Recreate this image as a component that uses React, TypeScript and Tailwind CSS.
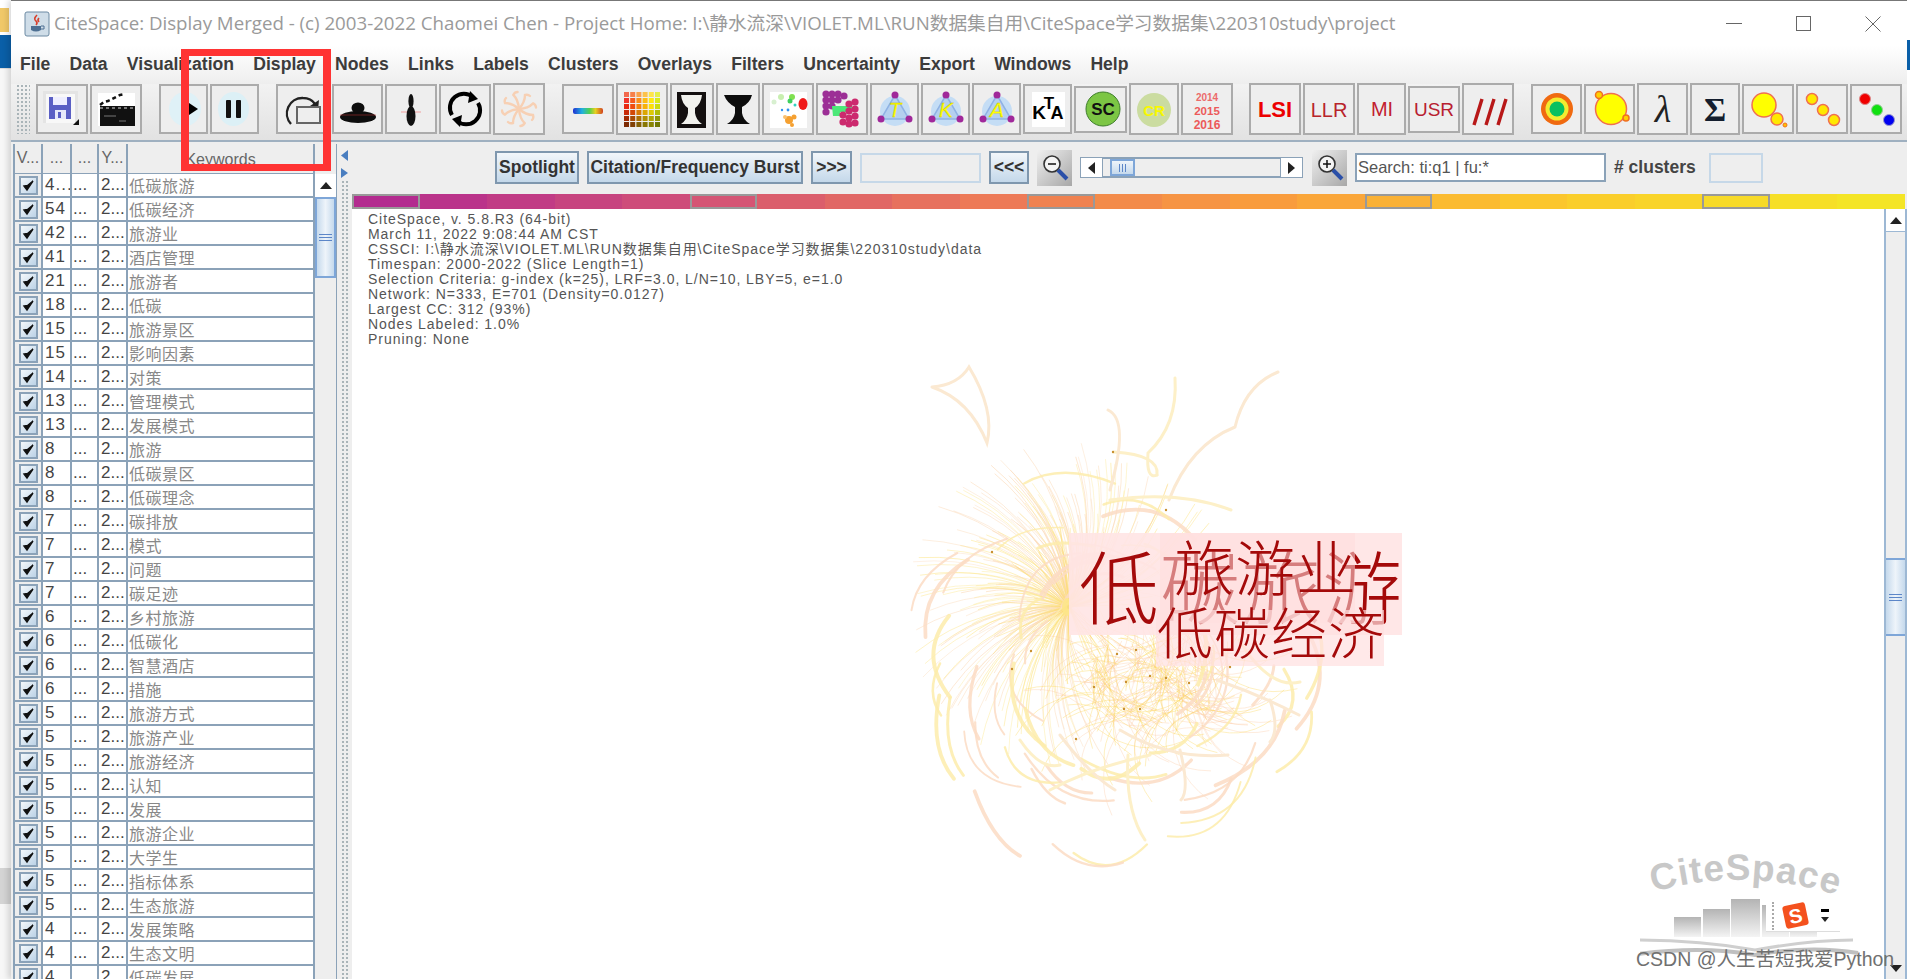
import React from "react";

const SANS = "font-['Liberation_Sans','Noto_Sans_CJK_SC',sans-serif]";

const rows: [string, string][] = [
  ["4...", "低碳旅游"], ["54", "低碳经济"], ["42", "旅游业"], ["41", "酒店管理"], ["21", "旅游者"], ["18", "低碳"],
  ["15", "旅游景区"], ["15", "影响因素"], ["14", "对策"], ["13", "管理模式"], ["13", "发展模式"], ["8", "旅游"],
  ["8", "低碳景区"], ["8", "低碳理念"], ["7", "碳排放"], ["7", "模式"], ["7", "问题"], ["7", "碳足迹"],
  ["6", "乡村旅游"], ["6", "低碳化"], ["6", "智慧酒店"], ["6", "措施"], ["5", "旅游方式"], ["5", "旅游产业"],
  ["5", "旅游经济"], ["5", "认知"], ["5", "发展"], ["5", "旅游企业"], ["5", "大学生"], ["5", "指标体系"],
  ["5", "生态旅游"], ["4", "发展策略"], ["4", "生态文明"], ["4", "低碳发展"],
];

const menus = ["File", "Data", "Visualization", "Display", "Nodes", "Links", "Labels", "Clusters", "Overlays", "Filters", "Uncertainty", "Export", "Windows", "Help"];

const info = [
  "CiteSpace, v. 5.8.R3 (64-bit)",
  "March 11, 2022 9:08:44 AM CST",
  "CSSCI: I:\\静水流深\\VIOLET.ML\\RUN数据集自用\\CiteSpace学习数据集\\220310study\\data",
  "Timespan: 2000-2022 (Slice Length=1)",
  "Selection Criteria: g-index (k=25), LRF=3.0, L/N=10, LBY=5, e=1.0",
  "Network: N=333, E=701 (Density=0.0127)",
  "Largest CC: 312 (93%)",
  "Nodes Labeled: 1.0%",
  "Pruning: None",
];

const keys: [number, number, number][] = [[179, 43, 143], [209, 79, 120], [236, 120, 88], [250, 158, 60], [251, 204, 43], [244, 229, 38]];
const segs = Array.from({ length: 23 }, (_, i) => {
  const t = (i / 22) * 5;
  const a = Math.min(4, Math.floor(t));
  const f = t - a;
  const c = keys[a].map((v, k) => Math.round(v + (keys[a + 1][k] - v) * f));
  return `rgb(${c[0]},${c[1]},${c[2]})`;
});

function rng(seed: number) {
  let s = seed;
  return () => {
    s = (s * 16807) % 2147483647;
    return s / 2147483647;
  };
}
const fine: { d: string; c: string; o: number }[] = [];
const arcs: { d: string; c: string; o: number; w: number }[] = [];
{
  const r = rng(4242);
  const cx = 1069, cy = 607;
  for (let i = 0; i < 230; i++) {
    const a = Math.PI * 0.42 + r() * Math.PI * 1.45;
    const l = 60 + r() * 105;
    const x = cx + Math.cos(a) * l, y = cy + Math.sin(a) * l;
    const b = a + 0.35;
    const mx = cx + Math.cos(b) * l * 0.55, my = cy + Math.sin(b) * l * 0.55;
    fine.push({ d: `M${cx} ${cy}Q${mx.toFixed(1)} ${my.toFixed(1)} ${x.toFixed(1)} ${y.toFixed(1)}`, c: r() > 0.5 ? "#fde68a" : "#fbd8b4", o: 0.5 + r() * 0.35 });
  }
  for (let i = 0; i < 70; i++) {
    const a = Math.PI * 0.2 + r() * Math.PI * 1.8;
    const l = 25 + r() * 60;
    fine.push({ d: `M${cx} ${cy}L${(cx + Math.cos(a) * l).toFixed(1)} ${(cy + Math.sin(a) * l).toFixed(1)}`, c: "#fcdc6c", o: 0.6 });
  }
  for (let i = 0; i < 260; i++) {
    const hx = 1090 + r() * 120, hy = 640 + r() * 90;
    const a = r() * Math.PI * 2;
    const l = 25 + r() * 70;
    const x = hx + Math.cos(a) * l, y = hy + Math.sin(a) * l;
    fine.push({ d: `M${hx.toFixed(1)} ${hy.toFixed(1)}Q${(hx + Math.cos(a + 0.5) * l * 0.6).toFixed(1)} ${(hy + Math.sin(a + 0.5) * l * 0.6).toFixed(1)} ${x.toFixed(1)} ${y.toFixed(1)}`, c: r() > 0.45 ? "#fcd34d" : "#fbc9a0", o: 0.5 });
  }
  for (let i = 0; i < 70; i++) {
    const a = r() * Math.PI * 2;
    const rad = 60 + r() * 130;
    const ccx = 1115 + Math.cos(a) * rad * 1.05, ccy = 665 + Math.sin(a) * rad;
    if (ccx > 1190 && ccy < 650) continue;
    const sw = 0.5 + r() * 0.7;
    const l = 22 + r() * 30;
    const x1 = ccx + Math.cos(a + 1.6) * l, y1 = ccy + Math.sin(a + 1.6) * l;
    const x2 = ccx + Math.cos(a - 1.6 * sw) * l, y2 = ccy + Math.sin(a - 1.6 * sw) * l;
    const qx = ccx + Math.cos(a) * l * 0.7, qy = ccy + Math.sin(a) * l * 0.7;
    arcs.push({ d: `M${x1.toFixed(1)} ${y1.toFixed(1)}Q${qx.toFixed(1)} ${qy.toFixed(1)} ${x2.toFixed(1)} ${y2.toFixed(1)}`, c: r() > 0.5 ? "#fdecac" : "#fbdcc4", o: 0.85, w: 1.5 + r() * 2.5 });
  }
}
const handArcs = [
  "M932 387Q958 385 969 367Q995 410 987 443Q970 400 932 387",
  "M1175 378Q1178 425 1148 453Q1146 480 1157 475",
  "M1278 372Q1245 385 1235 427Q1190 445 1169 500",
  "M1114 452Q1160 455 1157 475",
  "M1108 410Q1130 420 1110 490",
  "M1110 500Q1180 490 1231 510",
  "M1217 680Q1260 695 1299 715",
  "M1239 640Q1270 690 1300 682",
  "M1120 730Q1170 760 1228 755",
  "M1128 755Q1125 810 1145 840",
  "M1060 735Q1090 775 1115 790",
  "M1050 790Q1090 768 1150 755",
  "M1180 750Q1190 790 1181 800",
  "M1020 740Q1040 770 1060 765",
  "M1270 700Q1280 730 1270 742",
];
const nodes: [number, number][] = [[1069, 607], [992, 552], [1166, 510], [1113, 452], [1031, 651], [1012, 669], [1117, 654], [1136, 650], [1150, 676], [1166, 678], [1189, 683], [1126, 682], [1094, 687], [1124, 709], [1140, 709], [1076, 739], [1230, 667]];

function Tb({ w, tall, short, children }: { w: string; tall?: boolean; short?: boolean; children?: React.ReactNode }) {
  return (
    <div className={`${w} ${short ? "h-[47px] self-center" : tall ? "h-[52px] -mt-[1px]" : "h-[50px]"} shrink-0 border-2 border-[#ababab] bg-[#eeeeee] flex items-center justify-center overflow-hidden`}>
      {children}
    </div>
  );
}

function Ic({ children }: { children: React.ReactNode }) {
  return (
    <svg width="48" height="46" viewBox="0 0 48 46" className="shrink-0">
      {children}
    </svg>
  );
}

function IconText({ t, fill, size, weight = 400, y = 29, x = 24, font = "Liberation Sans" }: { t: string; fill: string; size: number; weight?: number; y?: number; x?: number; font?: string }) {
  return (
    <text x={x} y={y} textAnchor="middle" fill={fill} fontSize={size} fontWeight={weight} fontFamily={font}>
      {t}
    </text>
  );
}

const gridCols = [
  ["#f2684c", "#f7804a", "#fba24c", "#fcc24a", "#fde54a", "#e4ee4a"],
  ["#f0352a", "#f65a1e", "#fa8e18", "#fdbc14", "#fee80e", "#d8ea1a"],
  ["#e82a12", "#f04c0e", "#f4840a", "#f8b208", "#fde008", "#ccdc10"],
  ["#c82a08", "#d24806", "#d87a04", "#dca604", "#dcc804", "#b0bc08"],
  ["#a02a04", "#a84a04", "#ac7004", "#b09004", "#b0a404", "#909808"],
  ["#7c2a04", "#804004", "#846004", "#887804", "#888404", "#707804"],
];

function Tri({ l }: { l: string }) {
  return (
    <Ic>
      <circle cx="24" cy="25" r="15" fill="#c4ddf5" />
      <path d="M24 9L38 33H10Z" fill="#b4d0ef" stroke="#8fb2e4" strokeWidth="1.5" />
      <circle cx="24" cy="9" r="3.5" fill="#a0289a" />
      <circle cx="10" cy="33" r="3.5" fill="#a0289a" />
      <circle cx="38" cy="33" r="3.5" fill="#a0289a" />
      <text x="24" y="31" textAnchor="middle" fill="#ffff00" stroke="#c2b800" strokeWidth="0.3" fontSize="21" fontStyle="italic" fontFamily="Liberation Sans">{l}</text>
    </Ic>
  );
}

function Toolbar() {
  return (
    <div className="h-[56px] flex items-start pt-0 bg-gradient-to-b from-[#f2f2f2] to-[#e2e2e2]">
      <div className="w-[14px] h-[50px] ml-[5px] mr-[6px] shrink-0 bg-[radial-gradient(#a9b4b8_1px,transparent_1.2px)] bg-[length:4px_4px]" />
      <div className="flex gap-[2px] items-start">
        <Tb w="w-[52px]"><Ic>
          <rect x="5" y="5" width="35" height="32" fill="#e4e4e4" /><rect x="8" y="8" width="29" height="29" fill="#f8f8f8" />
          <path d="M11 11H33V33H11Z" fill="#5a5fc4" /><rect x="15" y="11" width="14" height="8" fill="#eef" /><rect x="17" y="24" width="11" height="9" fill="#e6e8fa" /><rect x="20" y="26" width="3" height="6" fill="#5a5fc4" />
          <path d="M41 33V39H35Z" fill="#111" />
        </Ic></Tb>
        <Tb w="w-[52px]"><Ic>
          <rect x="6" y="7" width="37" height="33" fill="#fff" />
          <path d="M8 19L12 16L16 15L20 13L24 11L28 9L33 8" stroke="#111" strokeWidth="2.5" strokeDasharray="4 3" fill="none" />
          <rect x="8" y="20" width="35" height="20" fill="#111" />
          <path d="M8 22H43" stroke="#ddd" strokeWidth="1" strokeDasharray="3 3" /><path d="M12 30H24M27 35H34" stroke="#777" strokeWidth="1" />
        </Ic></Tb>
        <div className="w-[13px] shrink-0" />
        <Tb w="w-[49px]"><Ic>
          <ellipse cx="25" cy="23" rx="16" ry="17" fill="#dff1f7" /><path d="M26 15L38 23L26 31Z" fill="#000" /><path d="M22 15H26V31H22Z" fill="#000" />
        </Ic></Tb>
        <Tb w="w-[49px]"><Ic>
          <ellipse cx="22.5" cy="23" rx="15.5" ry="17" fill="#dcf0f6" /><rect x="15" y="14" width="5" height="18" rx="1" fill="#111" /><rect x="25" y="14" width="5" height="18" rx="1" fill="#111" />
        </Ic></Tb>
        <div className="w-[13px] shrink-0" />
        <Tb w="w-[54px]"><Ic>
          <path d="M12 38A15.5 15.5 0 0 1 24 12Q32 12 36 18" fill="none" stroke="#222" strokeWidth="2.4" /><path d="M40 14L39 24L31 20Z" fill="#222" />
          <rect x="18" y="21" width="23" height="16" fill="#eee" stroke="#666" strokeWidth="2" />
        </Ic></Tb>
        <Tb w="w-[51px]" ><Ic>
          <ellipse cx="24" cy="31" rx="18" ry="6" fill="#0d0d0d" /><ellipse cx="24" cy="22" rx="6.5" ry="5.5" fill="#0d0d0d" /><path d="M12 29Q24 23 36 29" fill="#0d0d0d" /><path d="M6 29H42" stroke="#c33" strokeWidth="0.7" opacity="0.7" />
        </Ic></Tb>
        <Tb w="w-[52px]"><Ic>
          <path d="M14 26H34" stroke="#f0a0a0" strokeWidth="1" /><ellipse cx="24" cy="15" rx="2.6" ry="7" fill="#111" /><ellipse cx="24" cy="30" rx="4.5" ry="10" fill="#111" />
        </Ic></Tb>
        <Tb w="w-[52px]"><Ic>
          <path d="M11 29A14 14 0 0 1 32 11" fill="none" stroke="#000" strokeWidth="4" /><path d="M37 17A14 14 0 0 1 16 35" fill="none" stroke="#000" strokeWidth="4" />
          <path d="M29 5L37 13L27 17Z" fill="#000" /><path d="M19 41L11 33L21 29Z" fill="#000" />
        </Ic></Tb>
        <Tb w="w-[52px]" tall><Ic>
          <g stroke="#f7d0b4" strokeWidth="2.4" fill="none" strokeLinecap="round">
            {[0, 45, 90, 135, 180, 225, 270, 315].map((a) => (
              <path key={a} d="M24 23Q30 16 30 9Q33 8 35 10" transform={`rotate(${a} 24 23)`} />
            ))}
          </g>
        </Ic></Tb>
        <div className="w-[13px] shrink-0" />
        <Tb w="w-[52px]"><svg width="48" height="46" viewBox="0 0 48 46">
          <defs><linearGradient id="sp"><stop offset="0" stopColor="#2030d0" /><stop offset=".3" stopColor="#20b0e0" /><stop offset=".55" stopColor="#50d050" /><stop offset=".75" stopColor="#e8d020" /><stop offset="1" stopColor="#d04020" /></linearGradient></defs>
          <rect x="9" y="22" width="30" height="6" rx="2" fill="url(#sp)" />
        </svg></Tb>
        <Tb w="w-[52px]" tall><Ic>
          {gridCols.map((row, r) => row.map((c, i) => <rect key={`${r}-${i}`} x={6 + i * 6.2} y={6 + r * 6} width="5" height="5" fill={c} />))}
        </Ic></Tb>
        <Tb w="w-[44px]" tall><svg width="40" height="46" viewBox="0 0 40 46">
          <rect x="5" y="6" width="29" height="36" fill="#141010" />
          <path d="M9 9H30Q29 18 23 22V27Q24 34 30 38H9Q15 34 16 27V22Q10 18 9 9Z" fill="#f2f2ee" />
        </svg></Tb>
        <Tb w="w-[44px]" tall><svg width="40" height="46" viewBox="0 0 40 46">
          <path d="M6 9H34Q32 17 24 21V27Q25 34 32 38H9Q16 34 17 27V21Q9 17 6 9Z" fill="#0c0c0c" />
        </svg></Tb>
        <Tb w="w-[52px]" tall><Ic>
          <rect x="6" y="6" width="37" height="36" fill="#fff" />
          <circle cx="17" cy="11" r="3" fill="#c8efb0" /><circle cx="28" cy="11" r="3" fill="#80e050" /><circle cx="26" cy="15" r="2.5" fill="#40d060" /><circle cx="10" cy="16" r="2.5" fill="#d8f0d0" />
          <ellipse cx="39" cy="18" rx="4.5" ry="6" fill="#f01818" /><circle cx="31" cy="19" r="1.5" fill="#30d0c0" /><circle cx="18" cy="24" r="1.2" fill="#3090f0" /><circle cx="24" cy="24" r="1.4" fill="#3090f0" />
          <circle cx="25" cy="34" r="4" fill="#f5a030" /><circle cx="30" cy="31" r="2.5" fill="#f5a030" /><circle cx="21" cy="31" r="2" fill="#f9c070" /><circle cx="28" cy="39" r="2" fill="#f5a030" />
        </Ic></Tb>
        <Tb w="w-[52px]" tall><Ic>
          <g fill="#9c2f96">{[[8, 8], [14, 8], [20, 8], [26, 10], [8, 14], [14, 14], [20, 14], [8, 20], [14, 20], [8, 26]].map(([x, y]) => <circle key={`${x}${y}`} cx={x} cy={y} r="3.6" />)}</g>
          <path d="M14 20H34V26H22V30H15Z" fill="#4be878" />
          <g fill="#cc2a6e">{[[37, 16], [31, 18], [37, 23], [31, 25], [25, 29], [37, 30], [31, 32], [25, 36], [31, 38], [37, 37]].map(([x, y]) => <circle key={`${x}${y}`} cx={x} cy={y} r="3.6" />)}</g>
        </Ic></Tb>
        <Tb w="w-[49px]" tall><Tri l="T" /></Tb>
        <Tb w="w-[49px]" tall><Tri l="K" /></Tb>
        <Tb w="w-[49px]" tall><Tri l="A" /></Tb>
        <Tb w="w-[49px]"><Ic>
          <rect x="8" y="6" width="33" height="35" fill="#fff" />
          <text x="15" y="33" textAnchor="middle" fontSize="19" fontWeight="700" fontFamily="Liberation Sans">K</text>
          <text x="25" y="23" textAnchor="middle" fontSize="17" fontWeight="700" fontFamily="Liberation Sans">T</text>
          <text x="33" y="33" textAnchor="middle" fontSize="18" fontWeight="700" fontFamily="Liberation Sans">A</text>
        </Ic></Tb>
        <Tb w="w-[53px]" short><Ic>
          <circle cx="26" cy="22" r="17" fill="#7cc644" stroke="#3e7d2c" strokeWidth="1" /><IconText t="SC" x={26} y={28} fill="#111" size={17} weight={700} />
        </Ic></Tb>
        <Tb w="w-[50px]" tall><Ic>
          <circle cx="24" cy="24" r="17" fill="#cbdca0" /><IconText t="CR" y={30} fill="#f8f800" size={15} weight={700} />
        </Ic></Tb>
        <Tb w="w-[52px]" tall><Ic>
          <IconText t="2014" y={15} fill="#ec6a6a" size={10} weight={700} /><IconText t="2015" y={29} fill="#ec5a5a" size={11.5} weight={700} /><IconText t="2016" y={43} fill="#ec5a5a" size={12} weight={700} />
        </Ic></Tb>
        <div className="w-[12px] shrink-0" />
        <Tb w="w-[52px]" tall><Ic><IconText t="LSI" y={31} fill="#ec0000" size={22} weight={700} /></Ic></Tb>
        <Tb w="w-[52px]" tall><Ic><IconText t="LLR" y={31} fill="#b8242a" size={20} /></Ic></Tb>
        <Tb w="w-[49px]" tall><Ic><IconText t="MI" y={30} fill="#c22030" size={20} /></Ic></Tb>
        <Tb w="w-[52px]" short><Ic><IconText t="USR" y={29} fill="#b82030" size={19} /></Ic></Tb>
        <Tb w="w-[52px]" tall><Ic>
          <path d="M10 39L18 13M22 39L30 13M34 39L42 13" stroke="#b81818" strokeWidth="3.4" />
        </Ic></Tb>
        <div className="w-[13px] shrink-0" />
        <Tb w="w-[51px]"><Ic>
          <circle cx="24" cy="23" r="16" fill="#f06a10" /><circle cx="24" cy="23" r="11.5" fill="#f2ec30" /><circle cx="24" cy="23" r="7.5" fill="#08c060" />
        </Ic></Tb>
        <Tb w="w-[51px]"><Ic>
          <circle cx="25" cy="23" r="15.5" fill="#ffff00" stroke="#f07050" strokeWidth="1.5" /><circle cx="13" cy="9" r="3.5" fill="#ffd000" stroke="#f07020" strokeWidth="1.5" /><circle cx="40" cy="32" r="3" fill="#ffd000" stroke="#f07020" strokeWidth="1.5" />
        </Ic></Tb>
        <Tb w="w-[51px]" tall><Ic>
          <text x="24" y="36" textAnchor="middle" fontSize="38" fontStyle="italic" fontFamily="Liberation Serif" fill="#222">λ</text>
        </Ic></Tb>
        <Tb w="w-[50px]" tall><Ic>
          <text x="24" y="35" textAnchor="middle" fontSize="34" fontWeight="700" fontFamily="Liberation Serif" fill="#141e2e">Σ</text>
        </Ic></Tb>
        <Tb w="w-[52px]"><Ic>
          <circle cx="20" cy="19" r="12" fill="#ffff00" stroke="#f07050" strokeWidth="1.5" /><circle cx="33" cy="33" r="6" fill="#ffe800" stroke="#f07050" strokeWidth="1.5" /><circle cx="41" cy="39" r="2" fill="#ffc000" stroke="#f07020" />
        </Ic></Tb>
        <Tb w="w-[52px]"><Ic>
          <circle cx="14" cy="13" r="5.5" fill="#ffe800" stroke="#f07050" strokeWidth="1.5" /><circle cx="25" cy="24" r="5.5" fill="#ffe800" stroke="#f07050" strokeWidth="1.5" /><circle cx="36" cy="34" r="5.5" fill="#ffe800" stroke="#f07050" strokeWidth="1.5" />
        </Ic></Tb>
        <Tb w="w-[52px]"><Ic>
          <circle cx="13" cy="13" r="5.5" fill="#f00000" stroke="#d88" /><circle cx="25" cy="24" r="5.5" fill="#10e010" stroke="#9c9" /><circle cx="37" cy="34" r="5.5" fill="#0000f0" stroke="#99c" />
        </Ic></Tb>
      </div>
    </div>
  );
}

function Check() {
  return (
    <div className="w-[19px] h-[19px] border-2 border-[#8ba2b8] bg-gradient-to-br from-[#f4f8fb] to-[#bcd2e6] flex items-center justify-center">
      <svg width="13" height="13" viewBox="0 0 13 13"><path d="M2 7L5 11L11 2L5.5 6.5Z" fill="#111" stroke="#111" strokeWidth="1.4" /></svg>
    </div>
  );
}

function Head({ w, t, extra = "" }: { w: string; t: string; extra?: string }) {
  return (
    <div className={`${w} shrink-0 h-[29px] border-r-2 border-[#8ba2b8] flex items-center justify-center text-[#666] text-[16px] pb-[1px] bg-[#eeeeee] ${extra}`}>{t}</div>
  );
}

function Table() {
  return (
    <div className="w-[326px] shrink-0 flex pt-[2px] pl-[2px] overflow-hidden">
      <div className="w-[300px] shrink-0 border-l-2 border-[#8ba2b8]">
        <div className="flex border-b border-[#8ba2b8] items-end h-[30px]">
          <Head w="w-[28px]" t="V..." />
          <Head w="w-[29px]" t="..." />
          <Head w="w-[27px]" t="..." />
          <Head w="w-[29px]" t="Y..." />
          <div className="w-[185px] h-[29px] shrink-0 flex items-end justify-center text-[#666] text-[16px] bg-[#eeeeee] leading-[26px]">Keywords</div>
        </div>
        {rows.map(([n, k], i) => (
          <div key={i} className="flex h-[24px] bg-white border-b-2 border-[#8ba2b8] text-[#444] text-[17px] leading-[22px]">
            <div className="w-[28px] shrink-0 border-r-2 border-[#8ba2b8] bg-[#eeeeee] flex items-center justify-center"><Check /></div>
            <div className="w-[29px] shrink-0 border-r-2 border-[#8ba2b8] pl-[2px] tracking-[1px] overflow-hidden whitespace-nowrap">{n}</div>
            <div className="w-[27px] shrink-0 border-r-2 border-[#8ba2b8] pl-[1px]">...</div>
            <div className="w-[29px] shrink-0 border-r-2 border-[#8ba2b8] pl-[2px] whitespace-nowrap">2...</div>
            <div className="w-[184px] shrink-0 pl-[1px] text-[#888] tracking-[0.5px] font-['Noto_Sans_CJK_SC',sans-serif] text-[16px]">{k}</div>
          </div>
        ))}
      </div>
      <div className="w-[24px] shrink-0 border-l-2 border-r border-[#8ba2b8] bg-[#eeeeee]">
        <div className="h-[30px]" />
        <div className="h-[23px] bg-white flex items-center justify-center">
          <svg width="12" height="7" viewBox="0 0 12 7"><path d="M6 0L12 7H0Z" fill="#222" /></svg>
        </div>
        <div className="h-[81px] border-2 border-[#7ea6d8] bg-gradient-to-r from-[#c5d9ec] via-[#eef4fa] to-[#c5d9ec] flex flex-col gap-[2px] items-center justify-center">
          <div className="w-[13px] h-[1px] bg-[#5c86c8]" /><div className="w-[13px] h-[1px] bg-[#5c86c8]" /><div className="w-[13px] h-[1px] bg-[#5c86c8]" />
        </div>
      </div>
    </div>
  );
}

function Divider() {
  return (
    <div className="w-[15px] shrink-0 bg-[#eeeeee] relative flex flex-col pl-[3px] pt-[8px]">
      <svg width="9" height="28" viewBox="0 0 9 28" className="shrink-0"><path d="M8 0V11L1 5.5Z" fill="#4a7ec0" /><path d="M1 18V28L8 23Z" fill="#4a7ec0" /></svg>
      <div className="flex-1 mt-[2px] ml-[1px] w-[9px] bg-[radial-gradient(#a9b4b8_1px,transparent_1.2px)] bg-[length:4px_4px]" />
    </div>
  );
}

function JBtn({ w, t }: { w: string; t: string }) {
  return (
    <div className={`${w} h-[33px] shrink-0 border-2 border-[#7f97ae] bg-gradient-to-b from-[#f2f6fa] to-[#c4d8ea] flex items-center justify-center font-bold text-[17.5px] text-[#333] whitespace-nowrap`}>{t}</div>
  );
}

function Mag({ plus }: { plus?: boolean }) {
  return (
    <div className="w-[35px] h-[36px] shrink-0 bg-gradient-to-br from-[#f0f0f0] to-[#a8a8a8] flex items-center justify-center">
      <svg width="28" height="28" viewBox="0 0 28 28">
        <circle cx="11" cy="10" r="8" fill="#f4f4f4" stroke="#333" strokeWidth="1.6" />
        <path d="M7 10H15" stroke="#111" strokeWidth="1.5" />
        {plus && <path d="M11 6V14" stroke="#111" strokeWidth="1.5" />}
        <path d="M17 16L26 25" stroke="#2a4fa8" strokeWidth="4" />
      </svg>
    </div>
  );
}

function Controls() {
  return (
    <div className="h-[52px] flex items-center pl-[143px] gap-[8px] bg-[#eeeeee] pb-[1px]">
      <JBtn w="w-[84px]" t="Spotlight" />
      <JBtn w="w-[216px]" t="Citation/Frequency Burst" />
      <JBtn w="w-[41px]" t=">>>" />
      <div className="w-[121px] h-[30px] shrink-0 border-2 border-[#c6d8e8]" />
      <JBtn w="w-[40px]" t="<<<" />
      <Mag />
      <div className="w-[223px] h-[21px] shrink-0 flex items-stretch border border-[#8ba2b8] bg-[#eeeeee]">
        <div className="w-[22px] bg-white flex items-center justify-center border-r border-[#8ba2b8]"><svg width="7" height="12" viewBox="0 0 7 12"><path d="M7 0V12L0 6Z" fill="#222" /></svg></div>
        <div className="flex-1 pl-[7px] border-y border-[#8ba2b8]">
          <div className="w-[25px] h-full border-2 border-[#7ea6d8] bg-gradient-to-b from-[#eef4fa] to-[#c5d9ec] flex gap-[2px] items-center justify-center">
            <div className="w-[1px] h-[8px] bg-[#5c86c8]" /><div className="w-[1px] h-[8px] bg-[#5c86c8]" /><div className="w-[1px] h-[8px] bg-[#5c86c8]" />
          </div>
        </div>
        <div className="w-[22px] bg-white flex items-center justify-center border-l border-[#8ba2b8]"><svg width="7" height="12" viewBox="0 0 7 12"><path d="M0 0V12L7 6Z" fill="#222" /></svg></div>
      </div>
      <div className="ml-[1px]"><Mag plus /></div>
      <div className="w-[251px] h-[29px] shrink-0 border-2 border-[#8ba2b8] bg-white flex items-center pl-[1px] text-[16.5px] text-[#555]">Search: ti:q1 | fu:*</div>
      <div className="w-[86px] shrink-0 font-bold text-[17.5px] text-[#444] whitespace-nowrap"># clusters</div>
      <div className="w-[54px] h-[30px] shrink-0 border-2 border-[#c6d8e8] ml-[1px]" />
    </div>
  );
}

function Graph() {
  return (
    <svg width="1530" height="770" viewBox="352 209 1530 770" className="absolute left-0 top-0">
      <g fill="none">
        {fine.map((p, i) => <path key={i} d={p.d} stroke={p.c} strokeWidth="0.7" opacity={p.o} />)}
        {arcs.map((p, i) => <path key={i} d={p.d} stroke={p.c} strokeWidth={p.w} opacity={p.o} strokeLinecap="round" />)}
        {handArcs.map((d, i) => <path key={i} d={d} stroke={i % 2 ? "#fdf0c8" : "#fbe9d2"} strokeWidth="3" strokeLinecap="round" />)}
      </g>
      {nodes.map(([x, y], i) => <circle key={i} cx={x} cy={y} r={i ? 1.2 : 2} fill="#c89030" />)}
      <ellipse cx="1067" cy="607" rx="5" ry="9" fill="#fde68a" opacity="0.9" />
      <g fontFamily="Noto Sans CJK SC" fontWeight="300" fill="#a40a0a">
        <rect x="1069" y="533" width="333" height="102" fill="#ffe4e4" opacity="0.9" />
        <text x="1079" y="618" fontSize="80">低碳旅游</text>
        <rect x="1160" y="533" width="195" height="90" fill="#ffdcdc" opacity="0.55" />
        <text x="1174" y="591" fontSize="60">旅游业</text>
        <rect x="1156" y="610" width="228" height="56" fill="#ffe0e0" opacity="0.7" />
        <text x="1157" y="654" fontSize="56">低碳经济</text>
      </g>
    </svg>
  );
}

function Logo() {
  return (
    <svg width="230" height="130" viewBox="1640 840 230 130" className="absolute left-[1288px] top-[631px]">
      <defs>
        <path id="lg" d="M1653 892Q1745 866 1840 896" />
        <linearGradient id="bar" x1="0" y1="0" x2="0" y2="1"><stop offset="0" stopColor="#b4b4b4" /><stop offset="1" stopColor="#f4f4f4" /></linearGradient>
      </defs>
      <text fontFamily="Liberation Sans" fontWeight="700" fontSize="37" fill="#c8c8c8"><textPath href="#lg">CiteSpace</textPath></text>
      <rect x="1674" y="917" width="27" height="20" fill="url(#bar)" />
      <rect x="1703" y="909" width="27" height="28" fill="url(#bar)" />
      <rect x="1731" y="899" width="29" height="38" fill="url(#bar)" />
      <rect x="1762" y="905" width="27" height="32" fill="url(#bar)" />
      <rect x="1790" y="920" width="27" height="17" fill="url(#bar)" />
      <path d="M1636 940Q1700 940 1755 950Q1810 940 1853 940" fill="none" stroke="#cfcfcf" strokeWidth="3" />
      <path d="M1630 955Q1700 945 1755 955Q1810 945 1858 953" fill="none" stroke="#c0c0c0" strokeWidth="4" />
    </svg>
  );
}

export default function App() {
  return (
    <div className={`w-[1910px] h-[979px] overflow-hidden relative bg-white flex ${SANS}`}>
      <div className="w-[11px] shrink-0 flex flex-col bg-[#f7f7f7]">
        <div className="h-[35px] bg-white"><div className="w-[9px] h-[24px] mt-[8px] bg-[#f0c868]" /></div>
        <div className="h-[33px] bg-[#0a5fa8]" />
        <div className="h-[800px] border-t border-[#ddd]" />
        <div className="h-[36px] bg-[#d4d4d4]" />
      </div>
      <div className="w-[1896px] shrink-0 flex flex-col border-t border-[#777] h-[979px] shadow-[-3px_0_6px_rgba(0,0,0,0.15)]">
        <div className="h-[45px] bg-white flex items-center shrink-0">
          <svg width="26" height="26" viewBox="0 0 26 26" className="ml-[13px] shrink-0">
            <rect x="1" y="1" width="24" height="24" rx="2" fill="#cfdde8" stroke="#6d8aa3" />
            <path d="M7 15H17V19Q12 22 7 19Z" fill="#4d6f92" /><path d="M17 15H20V18H17" fill="none" stroke="#4d6f92" />
            <path d="M13 4Q9 8 12 10Q14 12 12 14M15 7Q13 9 15 11" fill="none" stroke="#d8402c" strokeWidth="1.6" />
          </svg>
          <div className="ml-[4px] text-[18.7px] text-[#9a9a9a] whitespace-nowrap font-['Open_Sans','Noto_Sans_CJK_SC',sans-serif]">
            CiteSpace: Display Merged - (c) 2003-2022 Chaomei Chen - Project Home: I:\静水流深\VIOLET.ML\RUN数据集自用\CiteSpace学习数据集\220310study\project
          </div>
          <div className="flex-1" />
          <div className="flex items-center pr-[26px] gap-[54px]">
            <div className="w-[16px] h-[1px] bg-[#666]" />
            <div className="w-[15px] h-[15px] border border-[#666]" />
            <svg width="16" height="16" viewBox="0 0 16 16"><path d="M0.5 0.5L15.5 15.5M15.5 0.5L0.5 15.5" stroke="#666" /></svg>
          </div>
        </div>
        <div className="h-[38px] shrink-0 bg-gradient-to-b from-white to-[#eeeeee] flex items-center pl-[9px] gap-[19.2px] font-bold text-[17.6px] text-[#3c3c3c] pb-[2px]">
          {menus.map((m) => <span key={m}>{m}</span>)}
        </div>
        <Toolbar />
        <div className="h-[2px] shrink-0 bg-[#9fb0c0]" />
        <div className="flex-1 flex min-h-0 bg-[#eeeeee]">
          <Table />
          <Divider />
          <div className="flex-1 flex flex-col min-w-0">
            <Controls />
            <div className="h-[15px] shrink-0 flex overflow-hidden">
              {segs.map((c, i) => (
                <div key={i} className={`w-[67.5px] shrink-0 ${i % 5 === 0 ? "border-2 border-[#999]" : ""}`} style={{ background: c }} />
              ))}
            </div>
            <div className="flex-1 flex min-h-0">
              <div className="flex-1 bg-white relative overflow-hidden pl-[16px] pt-[3px] text-[14px] leading-[15px] text-[#555] tracking-[0.96px]">
                <Graph />
                <Logo />
                <div className="relative">
                  {info.map((l) => <div key={l} className="whitespace-nowrap">{l}</div>)}
                </div>
              </div>
              <div className="w-[23px] shrink-0 border-x-2 border-[#9db8d4] bg-[#eeeeee] flex flex-col">
                <div className="h-[23px] bg-white border-b border-[#9db8d4] flex items-center justify-center shrink-0"><svg width="12" height="7" viewBox="0 0 12 7"><path d="M6 0L12 7H0Z" fill="#222" /></svg></div>
                <div className="h-[326px] shrink-0" />
                <div className="h-[78px] shrink-0 border-y-2 border-[#7ea6d8] bg-gradient-to-r from-[#c5d9ec] via-[#eef4fa] to-[#c5d9ec] flex flex-col gap-[2px] items-center justify-center">
                  <div className="w-[13px] h-[1px] bg-[#5c86c8]" /><div className="w-[13px] h-[1px] bg-[#5c86c8]" /><div className="w-[13px] h-[1px] bg-[#5c86c8]" />
                </div>
                <div className="flex-1" />
                <div className="h-[22px] bg-[#eee] flex items-center justify-center shrink-0"><svg width="12" height="7" viewBox="0 0 12 7"><path d="M6 7L12 0H0Z" fill="#222" /></svg></div>
              </div>
            </div>
          </div>
        </div>
      </div>
      <div className="w-[3px] shrink-0 bg-white"><div className="h-[30px] mt-[40px] bg-[#0a5fa8]" /></div>

      <div className="absolute left-[181px] top-[49px] w-[150px] h-[122px] border-y-[7px] border-x-[8px] border-[#ff3333]" />

      <div className="absolute left-[1766px] top-[900px] w-[74px] h-[32px] bg-white border-b border-[#ddd] flex items-center">
        <div className="w-[3px] h-[28px] ml-[6px] border-l-2 border-dotted border-[#aaa]" />
        <div className="ml-[9px] w-[23px] h-[23px] rounded-[3px] bg-[#f4511e] flex items-center justify-center -rotate-12 text-white font-bold text-[20px] leading-none">S</div>
        <div className="ml-[14px] flex flex-col items-center gap-[5px]">
          <div className="w-[8px] h-[3px] bg-black" />
          <svg width="8" height="5" viewBox="0 0 8 5"><path d="M0 0H8L4 5Z" fill="#222" /></svg>
        </div>
      </div>
      <div className="absolute left-[1636px] top-[947px] text-[19.5px] leading-[24px] text-[#707070] whitespace-nowrap font-['Liberation_Sans','Noto_Sans_CJK_SC',sans-serif]">CSDN @人生苦短我爱Python</div>
    </div>
  );
}
